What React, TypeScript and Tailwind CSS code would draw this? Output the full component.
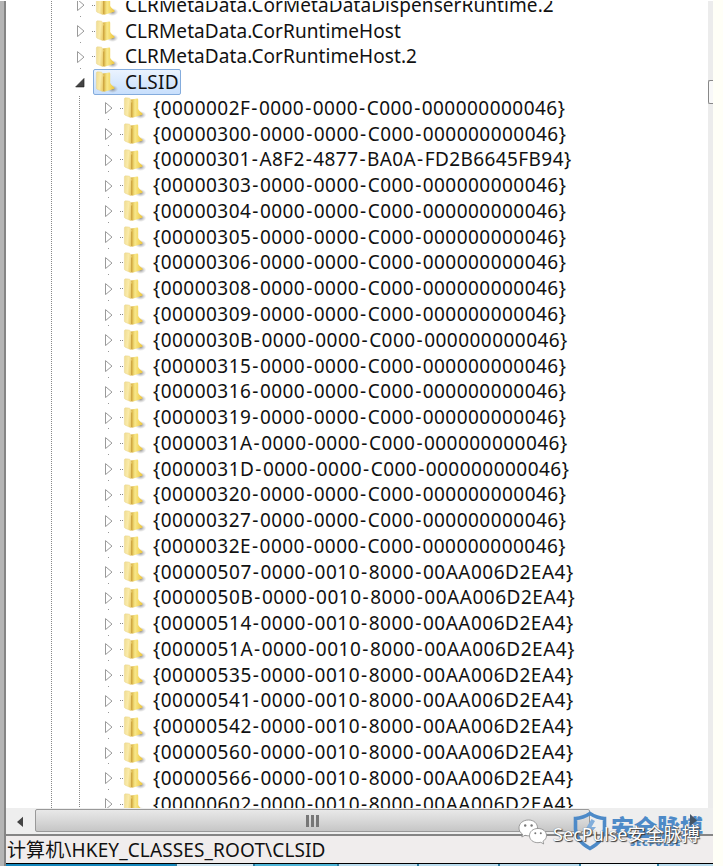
const C46 = '-0000-0000-C000-000000000046}';
const EA4 = '-0000-0010-8000-00AA006D2EA4}';

const keys = [
  '{0000002F' + C46,
  '{00000300' + C46,
  '{00000301-A8F2-4877-BA0A-FD2B6645FB94}',
  ...['00000303', '00000304', '00000305', '00000306', '00000308', '00000309', '0000030B', '00000315', '00000316', '00000319', '0000031A', '0000031D', '00000320', '00000327', '0000032E'].map((k) => '{' + k + C46),
  ...['00000507', '0000050B', '00000514', '0000051A', '00000535', '00000541', '00000542', '00000560', '00000566', '00000602'].map((k) => '{' + k + EA4),
];

function Folder() {
  return (
    <svg width="24" height="24" viewBox="0 0 24 24" className="shrink-0">
      <defs>
        <linearGradient id="front" x1="0" x2="1" y1="0" y2="0.3">
          <stop offset="0" stopColor="#efdc92" />
          <stop offset="0.6" stopColor="#faebaa" />
          <stop offset="1" stopColor="#ecd070" />
        </linearGradient>
        <linearGradient id="back" x1="0" x2="1">
          <stop offset="0" stopColor="#d5aa38" />
          <stop offset="0.35" stopColor="#f8e88a" />
          <stop offset="1" stopColor="#eec53a" />
        </linearGradient>
        <radialGradient id="shade">
          <stop offset="0" stopColor="#555" stopOpacity="0.7" />
          <stop offset="1" stopColor="#999" stopOpacity="0" />
        </radialGradient>
      </defs>
      <ellipse cx="17.5" cy="19" rx="5.8" ry="4" fill="url(#shade)" />
      <path d="M8 3.5 L14.2 2.6 Q15.2 2.6 15.2 3.8 V13 Q16.5 15.5 19.4 17.4 Q20 18.6 18.4 19.1 L9.5 21.8 L8 20.5Z" fill="url(#back)" />
      <path d="M1.4 3 Q1.4 1.8 2.5 1.8 L5.8 2 Q6.6 2.1 7.2 2.8 L8.1 4.4 Q8.6 5 8.6 6 V20.8 Q8.5 22 7.4 21.5 L2.1 19.2 Q1.4 18.9 1.4 18Z" fill="url(#front)" stroke="#e5cf80" strokeWidth="0.4" />
      <path d="M8.7 6.5 V21.3" stroke="#c2942f" strokeWidth="0.8" />
    </svg>
  );
}

function Arrow({ open = false }: { open?: boolean }) {
  return (
    <svg width="10" height="12" viewBox="0 0 10 12" className="shrink-0">
      {open ? (
        <path d="M9 1.5 V9.9 H0.7Z" fill="#444" stroke="#222" strokeWidth="0.7" />
      ) : (
        <path d="M2.5 0.6 L9 6.1 L2.5 11.6Z" fill="#fff" stroke="#9a9a9a" strokeWidth="1" />
      )}
    </svg>
  );
}

function Twisty({ open = false }: { open?: boolean }) {
  return (
    <span className="flex h-[25.77px] w-[10px] shrink-0 flex-col items-center justify-between">
      <span className="h-[2px] w-px" />
      <Arrow open={open} />
      <span className={open ? 'h-[2px] w-px' : 'h-[2px] w-px bg-linear-to-b from-[#999] from-50% to-transparent to-50%'} />
    </span>
  );
}

function Guid({ text }: { text: string }) {
  const tracking = text.endsWith(EA4) ? 'tracking-[0.51px]' : text.includes('A8F2') ? 'tracking-[0.41px]' : 'tracking-[0.46px]';
  return (
    <span className={'text-[19px] leading-[25px] ' + tracking}>
      {text.split('-').map((part, i) => (
        <span key={i}>
          {i > 0 && <span className="px-[1px]">-</span>}
          {part}
        </span>
      ))}
    </span>
  );
}

function Guide() {
  return <span className="w-px shrink-0 bg-[repeating-linear-gradient(to_bottom,#888_0_1px,transparent_1px_2px)]" />;
}

function Dots() {
  return <span className="h-px w-[4px] shrink-0 bg-[repeating-linear-gradient(to_right,#888_0_1px,transparent_1px_2px)]" />;
}

function ParentRow({ text }: { text: string }) {
  return (
    <div className="flex h-[25.75px] shrink-0 items-center pl-[12px]">
      <Twisty />
      <span className="ml-[7px] flex w-[4px] items-center"><Dots /></span>
      <span className="-ml-px flex"><Folder /></span>
      <span className="ml-[6px] text-[19px] leading-[25px] tracking-[0.08px]">{text}</span>
    </div>
  );
}

function Watermark() {
  return (
    <div className="absolute top-[808px] left-[515px] h-[44px] w-[195px]">
      <svg width="34" height="40" viewBox="0 0 34 40" className="absolute top-[3px] left-[58px]">
        <path d="M17 2.5 Q24 7 31.5 7.5 V18 Q31 30 17 37.5 Q3 30 2.5 18 V7.5 Q10 7 17 2.5Z" fill="none" stroke="#4d8ac8" strokeWidth="3.6" />
        <path d="M18.5 8 L12 19 H16 L12 29 L23 16 H18.5 L22 10Z" fill="#82aedb" />
      </svg>
      <div className="absolute top-[5px] left-[96px] text-[23px] leading-[28px] font-black text-[#4d8ac8]">安全脉搏</div>
      <div className="absolute top-[30px] left-[115px] text-[9px] leading-[9px] font-black tracking-[0.9px] text-[#4d8ac8]">SECPULSE</div>
      <svg width="10" height="14" viewBox="0 0 10 14" className="absolute top-[6px] left-[174px]">
        <path d="M1 0 L8 6.5 L1 12Z" fill="#445566" />
      </svg>
      <svg width="30" height="28" viewBox="0 0 30 28" className="absolute top-[11px] left-[3px]">
        <g fill="#fff" stroke="#888" strokeWidth="0.8">
          <path d="M10.5 1 C5 1 1 4.5 1 9 C1 11.7 2.4 13.8 4.6 15.2 L3.8 18 L7 16.3 Q10 17.4 13 16.5 L19.5 9 C19.5 4.5 16 1 10.5 1Z" />
          <path d="M20 9.5 C15 9.5 11.5 12.6 11.5 16.6 C11.5 20.6 15 23.7 20 23.7 L22.8 23.3 L25.7 25 L25 22.2 C27.2 20.9 28.5 19 28.5 16.6 C28.5 12.6 25 9.5 20 9.5Z" />
        </g>
        <g fill="#777"><circle cx="7.2" cy="6.5" r="1.2" /><circle cx="13.6" cy="6.5" r="1.2" /><circle cx="17.3" cy="14.2" r="1" /><circle cx="22.8" cy="14.2" r="1" /></g>
      </svg>
      <div className="absolute top-[14px] left-[38px] text-[18px] leading-[24px] tracking-[0.05px] text-white [text-shadow:1px_1px_1px_#333,0_0_1px_#555]">SecPulse安全脉搏</div>
    </div>
  );
}

export default function App() {
  return (
    <div className="relative flex h-[866px] w-[723px] overflow-hidden bg-white font-['Noto_Sans','Noto_Sans_CJK_SC',sans-serif] whitespace-nowrap text-[#111]">
      <div className="mt-px w-[6px] shrink-0 border-r-2 border-[#858585] bg-[#b5b5b5]" />
      <div className="flex w-[707px] shrink-0 flex-col pt-px">
        <div className="flex h-[807px] shrink-0">
          <div className="flex w-[702px] overflow-hidden">
            <div className="flex w-[73px] shrink-0 pr-[27px] pl-[45px]"><Guide /></div>
            <div className="-mt-[8.5px] -ml-[16px] flex h-[830px] flex-col">
              <ParentRow text="CLRMetaData.CorMetaDataDispenserRuntime.2" />
              <ParentRow text="CLRMetaData.CorRuntimeHost" />
              <ParentRow text="CLRMetaData.CorRuntimeHost.2" />
              <div className="flex h-[25.75px] shrink-0 items-center pl-[12px]">
                <Twisty open />
                <span className="mb-[1px] ml-[8px] flex h-[26px] w-[88px] items-center rounded-[2px] border border-[#84acdd] bg-linear-to-b from-[#eaf3fe] to-[#c8dffc] pl-px">
                  <Folder />
                  <span className="ml-[6px] text-[19px] leading-[24px] tracking-[0.2px]">CLSID</span>
                </span>
              </div>
              <div className="flex">
                <div className="flex w-[40px] shrink-0 pl-[16px]"><Guide /></div>
                <div>
                  {keys.map((key) => (
                    <div key={key} className="flex h-[25.77px] items-center">
                      <Twisty />
                      <span className="ml-[7px] flex"><Dots /></span>
                      <span className="-ml-px flex"><Folder /></span>
                      <span className="ml-[6px] flex"><Guid text={key} /></span>
                    </div>
                  ))}
                </div>
              </div>
            </div>
          </div>
          <div className="w-[5px] bg-[#ececec] pt-[79px]">
            <div className="h-[24px] rounded-l-[2px] border border-r-0 border-[#888] bg-[#f8f8f8]" />
          </div>
        </div>
        <div className="flex h-[26px] shrink-0 bg-[#eeeeee] pt-px">
          <div className="flex w-[29px] items-center justify-center">
            <svg width="8" height="12" viewBox="0 0 8 12"><path d="M6 0.8 V11 L0 6Z" fill="#444" /></svg>
          </div>
          <div className="flex h-[23px] w-[555px] items-center justify-center rounded-[2px] border border-[#999] bg-linear-to-b from-[#e8e8e8] via-[#d8d8d8] to-[#c6c6c6]">
            <div className="flex h-[12px] gap-[2px]">
              <i className="w-[3px] bg-[#777]" /><i className="w-[3px] bg-[#777]" /><i className="w-[3px] bg-[#777]" />
            </div>
          </div>
        </div>
        <div className="flex h-[29px] shrink-0 items-center border-t-2 border-[#858585] bg-[#f0eded] pt-[2px] pl-px text-[19px] tracking-[0.12px]">
          <span>计算机\HKEY_CLASSES_ROOT\CLSID</span>
        </div>
        <div className="flex h-[3px] shrink-0 gap-[2px] border-t border-black bg-[#2d7fa3]">
          <i className="w-[169px] bg-[#1487bd]" />
          <i className="w-[76px] bg-[#cfe6f2]" />
          <i className="w-[82px] bg-[#4db5d8]" />
          <i className="w-[78px] bg-[#b9dcee]" />
          <i className="w-[79px] bg-[#b9dcee]" />
          <i className="w-[79px] bg-[#b9dcee]" />
          <i className="w-[76px] bg-[#eef8fc]" />
          <i className="flex-1 bg-[#b9dcee]" />
        </div>
      </div>
      <div className="flex-1 bg-[#fffff7]" />
      <Watermark />
    </div>
  );
}
